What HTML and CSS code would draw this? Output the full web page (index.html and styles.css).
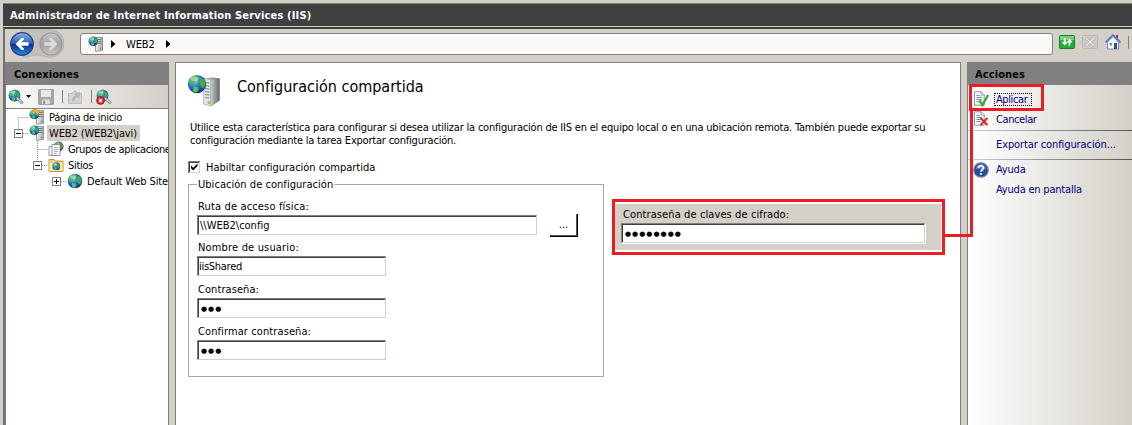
FILE: index.html
```html
<!DOCTYPE html>
<html lang="es">
<head>
<meta charset="utf-8">
<title>Administrador de Internet Information Services (IIS)</title>
<link rel="stylesheet" href="styles.css">
</head>
<body>
<svg class="defs" width="0" height="0">
  <defs>
    <radialGradient id="sea" cx=".35" cy=".3" r=".75"><stop offset="0" stop-color="#9fd8ff"/><stop offset=".45" stop-color="#2f78dc"/><stop offset="1" stop-color="#0c2f8c"/></radialGradient>
    <linearGradient id="steel" x1="0" x2="1"><stop offset="0" stop-color="#f2f4f5"/><stop offset="1" stop-color="#a3adb1"/></linearGradient>
    <linearGradient id="steelDark" x1="0" x2="1"><stop offset="0" stop-color="#c9cdcf"/><stop offset="1" stop-color="#5f696b"/></linearGradient>
    <linearGradient id="back" x1="0" y1="0" x2="0" y2="1"><stop offset="0" stop-color="#8fb0e2"/><stop offset=".48" stop-color="#2a5cb8"/><stop offset=".52" stop-color="#0a3190"/><stop offset="1" stop-color="#1f8be8"/></linearGradient>
    <linearGradient id="fwd" x1="0" y1="0" x2="0" y2="1"><stop offset="0" stop-color="#c9c9c9"/><stop offset=".5" stop-color="#a2a2a2"/><stop offset="1" stop-color="#c4c4c4"/></linearGradient>
    <symbol id="globe" viewBox="0 0 16 16">
      <circle cx="8" cy="8" r="7.3" fill="url(#sea)"/>
      <path d="M2.2 4.2 5.6 1.4 9 1.2 8.6 3.4 6.4 4.8 6.2 7 3.8 8.4 1.4 7z" fill="#4fbf3c"/>
      <path d="M10.5 3 13.6 4 15 8 13.2 11.4 11 10.4 10.6 8 9 6.4z" fill="#3fae36"/>
      <path d="M5 10 8.6 10.4 9.4 12.4 7.4 15 5 14z" fill="#55c440"/>
      <ellipse cx="6" cy="4" rx="3" ry="1.8" fill="#fff" opacity=".4"/>
    </symbol>
    <symbol id="server" viewBox="0 0 16 16">
      <path d="M7.5 1.5h7v13l-7 .8z" fill="url(#steel)" stroke="#7d888d" stroke-width=".8"/>
      <path d="M9 3.5h4.5M9 5.5h4.5M9 7.5h4.5" stroke="#68757a" stroke-width=".9"/>
      <path d="M11.8 12.5h1.6" stroke="#49b431" stroke-width="1.5"/>
      <use href="#globe" x="0" y="0" width="10.5" height="10.5"/>
    </symbol>
    <symbol id="start" viewBox="0 0 16 16">
      <use href="#server"/>
      <path d="M3 2 6 .2 11 2 9 6 7 4z" fill="#f2b52c" stroke="#c98712" stroke-width=".5"/>
    </symbol>
    <symbol id="pools" viewBox="0 0 16 16">
      <use href="#globe" x="5" y="0" width="11" height="11"/>
      <path d="M1 5.5h7v9H1z" fill="#fff" stroke="#888" stroke-width=".9"/>
      <path d="M4 3.5h8v11H4z" fill="#fff" stroke="#888" stroke-width=".9"/>
      <path d="M6 6.5h4M6 8.5h4M6 10.5h4M6 12.5h3" fill="none" stroke="#7fa0a8" stroke-width=".8"/>
      <path d="M7 3 10 1.5M12.5 4l1 4" stroke="#e04738"/>
    </symbol>
    <symbol id="folder" viewBox="0 0 16 16">
      <path d="M1 2.5h5l1.5 1.5H15v10.5H1z" fill="#f3d477" stroke="#c49a37"/>
      <path d="M1.5 6h13v8h-13z" fill="#fae8a1"/>
      <use href="#globe" x="4" y="5" width="8.5" height="8.5"/>
    </symbol>
    <symbol id="connect" viewBox="0 0 16 16">
      <use href="#globe" x="0" y="0" width="13" height="13"/>
      <path d="m8 8 2 .5 5.2 4.7-1.4 1.7-5.4-4.6z" fill="#b8cdd6" stroke="#607c8a" stroke-width=".8"/>
    </symbol>
    <symbol id="page" viewBox="0 0 16 16">
      <path d="M1.5.8h6.7l3 3v10.4H1.5z" fill="#fafcff" stroke="#8796a8"/>
      <path d="M8 .8v3.3h3.2" fill="#dbe4ee" stroke="#8796a8" stroke-width=".8"/>
      <path d="M3.4 4.5h3.4M3.4 6.5h5.8M3.4 8.5h5.8M3.4 10.5h4.4" stroke="#6785ad" stroke-width=".9"/>
    </symbol>
  </defs>
</svg>

<div class="window">
  <header class="titlebar">Administrador de Internet Information Services (IIS)</header>

  <nav class="navbar">
    <svg class="history" width="56" height="32" viewBox="0 0 56 32">
      <path d="M13 1h31c16 2 16 25 0 27-5 1-10-2-15-2s-9 3-14 2z" fill="#c3c0bb" stroke="#b4b1ac"/>
      <circle cx="14" cy="15" r="11.3" fill="url(#back)" stroke="#24427f" stroke-width="1.2"/>
      <path d="M7.5 15l6-6h2.4v1.5l-2.7 2.8h7.4v3.4h-7.4l2.7 2.8V21h-2.4z" fill="#fff"/>
      <circle cx="43" cy="15" r="11" fill="url(#fwd)" stroke="#989898" stroke-width="1.2"/>
      <path d="M49.5 15l-6-6h-2.4v1.5l2.7 2.8h-7.4v3.4h7.4l-2.7 2.8V21h2.4z" fill="#dcdcdc"/>
    </svg>
    <div class="address">
      <svg width="16" height="16"><use href="#server"/></svg>
      <svg class="crumb" width="5" height="8"><path d="M0 0 4.5 4 0 8z"/></svg>
      <span class="place">WEB2</span>
      <svg class="crumb" width="5" height="8"><path d="M0 0 4.5 4 0 8z"/></svg>
    </div>
    <div class="navtools">
      <svg width="16" height="16" viewBox="0 0 16 16"><rect x=".5" y="1.5" width="15" height="13" rx="1" fill="#27ad34" stroke="#168326"/><path d="M1 2h14v4H1z" fill="#70d576"/><path d="M6.5 4H4.8v4H2.6l3.2 3.5L9 8H6.8V6M9.5 12h1.7V8h2.2l-3.2-3.5" fill="#fff"/><path d="M7.5 8.5h5.6L10.3 5z" fill="#fff"/></svg>
      <svg width="16" height="16" viewBox="0 0 16 16"><rect x=".5" y="1.5" width="15" height="13" rx="1" fill="#cbcac6" stroke="#bbb9b5"/><path d="m4 4 8 8m0-8-8 8" stroke="#aaa" stroke-width="2.6"/><path d="m4 4 8 8m0-8-8 8" stroke="#ecebe8" stroke-width="1.2"/></svg>
      <svg width="16" height="16" viewBox="0 0 16 16"><path d="M11 1h2v5h-2z" fill="#a33c38"/><path d="M2.5 8 8 2.5 13.5 8v7h-11z" fill="#f4f8fd" stroke="#6f8db7"/><path d="M.5 8.5 8 1l7.5 7.5" fill="none" stroke="#4f79b8" stroke-width="1.7"/><path d="M4.5 9H7v2.5H4.5z" fill="#6d89b5"/><path d="M9 9h3v6H9z" fill="#31568f"/></svg>
      <i class="divider"></i>
    </div>
  </nav>

  <div class="panes">
    <aside class="connections">
      <h2 class="pane-title">Conexiones</h2>
      <div class="toolbar">
        <svg width="16" height="16"><use href="#connect"/></svg>
        <svg class="drop" width="5" height="3"><path d="M0 0h5L2.5 3z"/></svg>
        <svg class="save" width="16" height="16" viewBox="0 0 16 16"><path d="M.7.7h14.6v14.6H.7z" fill="#a9a9a9" stroke="#969696"/><path d="M3 1h10v7H3z" fill="#e8e8e8"/><path d="M4 10.5h8V15H4z" fill="#ddd"/><path d="M5 11.5h2V15H5z" fill="#999"/></svg>
        <i class="divider"></i>
        <svg width="16" height="16" viewBox="0 0 16 16"><path d="M1.5 4.5h4l1-2h3l1 2h4v10h-13z" fill="#d5d5d5" stroke="#bcbcbc"/><path d="M5 12c0-3 1-4 4-5L7.5 5 13 3.5 12 9l-1.5-1.3C8 9 7 10 7 12z" fill="#b9b9b9" stroke="#adadad" stroke-width=".5"/></svg>
        <i class="divider late"></i>
        <svg width="16" height="16" viewBox="0 0 16 16"><use href="#connect"/><circle cx="4.5" cy="11.5" r="4" fill="#d22a24" stroke="#9a1713" stroke-width=".6"/><path d="m3 10 3 3m0-3-3 3" stroke="#fff" stroke-width="1.2"/></svg>
      </div>
      <div class="tree">
        <svg class="branches" width="80" height="80" viewBox="0 0 80 80"><path d="M12.5 8.5V24M12.5 8.5H23M17 24.5h6M31.5 32v24M31.5 40.5H42M36 56.5h6M55 72.5h6"/></svg>
        <div class="node"><svg width="16" height="16"><use href="#start"/></svg><span class="label t-home">Página de inicio</span></div>
        <div class="node open"><i class="expander"></i><svg width="16" height="16"><use href="#server"/></svg><span class="label selected">WEB2 (WEB2\javi)</span></div>
        <div class="node level2"><svg width="16" height="16"><use href="#pools"/></svg><span class="label t-pools">Grupos de aplicaciones</span></div>
        <div class="node level2 open"><i class="expander"></i><svg width="16" height="16"><use href="#folder"/></svg><span class="label t-sites">Sitios</span></div>
        <div class="node level3 open"><i class="expander plus"></i><svg width="16" height="16"><use href="#globe"/></svg><span class="label t-site">Default Web Site</span></div>
      </div>
    </aside>

    <main class="feature">
      <div class="heading">
        <svg width="33" height="34" viewBox="0 0 33 34">
          <path d="M16 4.5 24 3.5 31.5 4.5v22L23 32.5 15.5 30z" fill="url(#steelDark)"/>
          <path d="M16 4.5 22.5 5.5V32L15.5 30z" fill="#e3e6e6" stroke="#969d9e" stroke-width=".6"/>
          <path d="M22.5 5.5 31.5 4.5v22L22.5 32z" fill="url(#steelDark)"/>
          <path d="M17 8.5l4.5.7M17 11.5l4.5.7M17 14.5l4.5.7M17 17.5l4.5.7M17 20.5l4.5.7M17 23.5l4.5.7" stroke="#899193" stroke-width="1.2"/>
          <circle cx="21" cy="28.5" r="1.5" fill="#8bcf31"/>
          <use href="#globe" x="-1" y="0" width="20" height="20"/>
        </svg>
        <h1>Configuración compartida</h1>
      </div>
      <p class="intro"><span class="t-line1">Utilice esta característica para configurar si desea utilizar la configuración de IIS en el equipo local o en una ubicación remota. También puede exportar su</span><br><span class="t-line2">configuración mediante la tarea Exportar configuración.</span></p>
      <label class="check"><svg width="12" height="12" viewBox="0 0 12 12"><path d="M0 0h12v12H0z" fill="#d4d0c8"/><path d="M0 0h12v1H1v11H0z" fill="#808080"/><path d="M1 1h10v10H1z" fill="#404040"/><path d="M2 2h9v9H2z" fill="#fff"/><path d="M3 4.5v2.7L5.2 9.4 9.5 5V2.5L5.2 6.7z"/></svg><span>Habiltar configuración compartida</span></label>
      <div class="columns">
        <section class="location">
          <h3>Ubicación de configuración</h3>
          <label class="t-path">Ruta de acceso física:</label>
          <div class="path-row"><div class="field wide"><span class="t-share">\\WEB2\config</span></div><button class="browse">...</button></div>
          <label class="t-user">Nombre de usuario:</label>
          <div class="field"><span class="t-value">iisShared</span></div>
          <label class="t-pass">Contraseña:</label>
          <div class="field dots">●●●</div>
          <label class="t-confirm">Confirmar contraseña:</label>
          <div class="field dots">●●●</div>
        </section>
        <section class="keys">
          <div class="keys-body">
            <label class="t-keys">Contraseña de claves de cifrado:</label>
            <div class="field dots">●●●●●●●●</div>
          </div>
        </section>
      </div>
    </main>

    <aside class="actions">
      <h2 class="pane-title">Acciones</h2>
      <div class="action apply"><svg width="16" height="16" viewBox="0 0 16 16"><use href="#page"/><path d="m6.5 9.5 3 4.5 5.5-10" fill="none" stroke="#36ae25" stroke-width="2.3"/></svg><span class="focus">Aplicar</span></div>
      <div class="action cancel"><svg width="16" height="16" viewBox="0 0 16 16"><use href="#page"/><path d="m7.5 7 7 7m0-7-7 7" stroke="#d32824" stroke-width="2"/></svg><span>Cancelar</span></div>
      <hr>
      <div class="action export"><span>Exportar configuración...</span></div>
      <hr>
      <div class="action help"><svg width="16" height="16" viewBox="0 0 16 16"><circle cx="8" cy="8" r="7.2" fill="#294d9e" stroke="#71809c" stroke-width="1.3"/><path d="M2.5 7A5.6 5.6 0 0 1 13.5 7z" fill="#7190d0" opacity=".65"/><path d="M5.5 6.1C5.5 2.7 10.6 3 10.5 6 10.4 7.8 8 7.7 8 9.7" fill="none" stroke="#fff" stroke-width="1.7"/><circle cx="8" cy="12" r="1.1" fill="#fff"/></svg><span>Ayuda</span></div>
      <div class="action online"><span>Ayuda en pantalla</span></div>
    </aside>
  </div>

  <div class="mark mark-apply"></div>
  <svg class="mark-link" width="28" height="127"><path d="M0 124.5H26.5V0"/></svg>
</div>
</body>
</html>
```
FILE: styles.css
```css
* { box-sizing: border-box; }
body { margin: 0; background: #d4d0c8; color: #000; font: 11px/13px "DejaVu Sans Condensed", "DejaVu Sans", sans-serif; overflow: hidden; }
.defs { position: absolute; }
svg { flex: none; display: block; }
h1, h2, h3, p { margin: 0; font-size: 11px; }
.window { position: relative; width: 1132px; height: 425px; padding: 3px 0 0 3px; display: flex; flex-direction: column; overflow: hidden; }

.titlebar { flex: none; height: 23px; padding: 5px 7px; border-top: 1px solid #808080; background: #404040; color: #fff; font-weight: bold; letter-spacing: .17px; white-space: nowrap; }

.navbar { flex: none; height: 35px; margin-top: 1px; border-top: 2px solid #404040; border-left: 2px solid #707070; display: flex; align-items: flex-start; padding-left: 3px; }
.history { margin-right: 16px; }
.address { width: 973px; height: 22px; margin-top: 4px; padding-left: 7px; border: 1px solid #808080; border-radius: 3px; background: #faf9f8; display: flex; align-items: center; }
.address .crumb { margin-left: 7px; }
.address .place { margin: 1px 5px 0 10px; letter-spacing: -.1px; }
.address .place + .crumb { margin-left: 6px; }
.navtools { display: flex; gap: 7px; margin: 5px 0 0 6px; align-items: center; }
.divider { flex: none; width: 1px; height: 13px; background: #808080; }

.panes { flex: 1; min-height: 0; display: flex; border-left: 2px solid #707070; }
.pane-title { height: 23px; padding: 6px 7px; background: #808080; font-weight: bold; }
.connections { width: 164px; border-left: 1px solid #808080; border-right: 1px solid #808080; background: #fff; overflow: hidden; flex: none; }
.connections .pane-title { letter-spacing: .1px; padding-left: 8px; }
.toolbar { height: 24px; background: linear-gradient(90deg, #fbfaf9, #d4d0c8); border-bottom: 1px solid #808080; display: flex; align-items: center; padding-left: 2px; }
.toolbar .drop { margin: 0 7px 0 2px; }
.toolbar .divider { margin: 0 4px 0 8px; }
.tree { position: relative; }
.branches { position: absolute; left: 0; top: 0; }
.branches path { fill: none; stroke: #909090; stroke-dasharray: 1 1; }
.node { position: relative; height: 16px; padding-left: 23px; display: flex; align-items: center; white-space: nowrap; }
.node.open { padding-left: 8px; }
.node.level2 { padding-left: 42px; }
.node.level2.open { padding-left: 27px; }
.node.level3.open { padding-left: 46px; }
.expander { flex: none; width: 9px; height: 9px; margin-right: 6px; border: 1px solid #808080; background: linear-gradient(#000, #000) center / 5px 1px no-repeat #fff; }
.expander.plus { background: linear-gradient(#000, #000) center / 5px 1px no-repeat, linear-gradient(#000, #000) center / 1px 5px no-repeat, #fff; }
.label { padding: 2px 2px 1px 4px; }
.selected { padding: 2px 3px 1px 2px; margin-left: 2px; background: #d4d0c8; letter-spacing: -.12px; }
.t-home { letter-spacing: -.28px; }
.t-pools { letter-spacing: -.36px; }
.t-sites { letter-spacing: -.3px; }
.t-site { letter-spacing: -.12px; }

.feature { width: 786px; margin-left: 6px; flex: none; border: 1px solid #808080; border-bottom: 0; background: #fff; padding: 11px 0 0 12px; }
.heading { display: flex; height: 34px; gap: 16px; }
h1 { font-size: 16px; line-height: 20px; font-weight: normal; margin-top: 3px; }
.intro { margin: 13px 0 0 2px; white-space: nowrap; }
.t-line1 { letter-spacing: -.2px; }
.t-line2 { letter-spacing: -.21px; }
.check { display: flex; align-items: center; gap: 6px; height: 14px; margin-top: 13px; }
.columns { display: flex; align-items: flex-start; gap: 8px; margin-top: 10px; }
.location { width: 416px; height: 193px; border: 1px solid #a8a8a8; padding: 0 0 0 8px; display: flex; flex-direction: column; }
.location h3 { align-self: flex-start; height: 13px; margin: -7px 0 9px; padding: 0 1px; background: #fff; font-weight: normal; letter-spacing: .04px; }
.location label { height: 13px; margin: 7px 0 2px 1px; }
.location h3 + label { margin-top: 0; }
.path-row { display: flex; gap: 13px; height: 21px; margin-bottom: -2px; }
.field { flex: none; width: 189px; height: 20px; border: 1px solid #d4d0c8; border-top-color: #808080; border-left-color: #808080; box-shadow: inset 1px 1px #404040; background: #fff; padding: 3px 1px; white-space: nowrap; }
.field.wide { width: 340px; height: 20px; padding-left: 2px; }
.field.dots { font: 7px/12px "DejaVu Sans", sans-serif; letter-spacing: 1px; padding-left: 3px; padding-top: 4px; }
.browse { width: 28px; height: 23px; margin-top: -1px; padding: 0 0 2px; border: 0; border-right: 1px solid #000; border-bottom: 1px solid #000; box-shadow: inset -1px -1px #555; background: #fff; font: inherit; }
.t-path { letter-spacing: .15px; }
.t-user { letter-spacing: .17px; }
.t-value { letter-spacing: -.28px; }
.t-pass { letter-spacing: .07px; }
.t-confirm { letter-spacing: .1px; }
.t-keys { letter-spacing: .1px; }
.keys { width: 333px; height: 56px; margin-top: 15px; border: 3px solid #ed1c24; padding: 2px 1px 2px 0; background: #fff; }
.keys-body { height: 46px; background: #d4d0c8; padding: 4px 6px; }
.keys-body label { display: block; height: 15px; padding-left: 2px; }
.keys .field { width: 304px; height: 20px; box-shadow: inset 1px 1px #404040, 1px 1px #fff; }

.actions { width: 166px; margin-left: 6px; flex: none; border-left: 1px solid #808080; background: linear-gradient(90deg, #fff, #d4d0c8); color: #000080; white-space: nowrap; }
.actions .pane-title { color: #000; letter-spacing: .1px; }
.action { display: flex; align-items: center; height: 20px; padding-left: 28px; }
.action svg { margin: 0 7px 0 -23px; }
.apply { margin-top: 4px; }
.focus { margin-left: -2px; padding: 0 5px 0 2px; outline: 1px dotted #000; outline-offset: -1px; }
.apply, .cancel { letter-spacing: -.4px; }
.export { height: 28px; padding-bottom: 2px; letter-spacing: -.1px; }
.help, .online { letter-spacing: -.2px; }
.actions hr { height: 1px; border: 0; margin: 0; background: linear-gradient(90deg, #d4d0c8, #555); }
.cancel + hr { margin-top: 1px; }
.help { height: 19px; }

.mark { position: absolute; border: 3px solid #ed1c24; }
.mark-apply { left: 969px; top: 84px; width: 75px; height: 27px; }
.mark-link { position: absolute; left: 945px; top: 111px; }
.mark-link path { fill: none; stroke: #ed1c24; stroke-width: 3; }
```
